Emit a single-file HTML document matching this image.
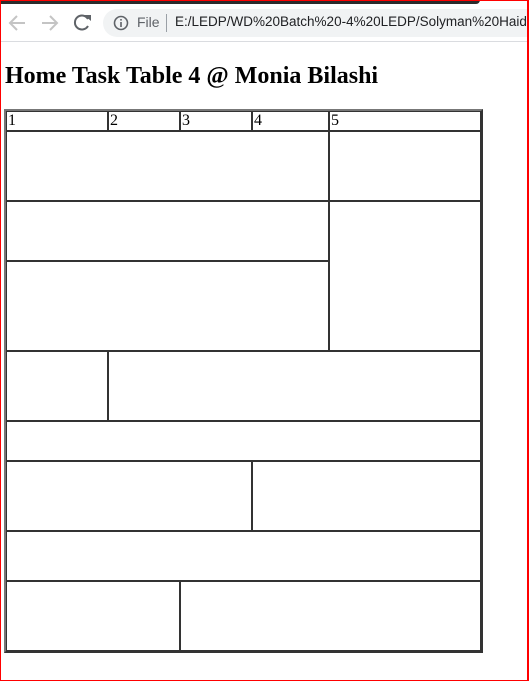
<!DOCTYPE html>
<html><head><style>
*{margin:0;padding:0;box-sizing:border-box}
body{width:529px;height:681px;position:relative;background:#fff;overflow:hidden;font-family:"Liberation Serif",serif}
.a{position:absolute}
.c{position:absolute;border:1px solid #333;font-size:16px;line-height:17px;color:#000;padding-left:1px}
</style></head><body>
<div class="a" style="left:103px;top:9px;width:424px;height:28px;background:#f1f3f4;border-radius:14px 0 0 14px"></div>
<div class="a" style="left:0;top:0;width:480px;height:4px;background:#2b2b2b;border-bottom-right-radius:4px"></div>
<div class="a" style="left:0;top:41px;width:528px;height:1px;background:#dadce0"></div>
<svg class="a" style="left:0;top:0" width="110" height="41">
<g fill="none" stroke-width="2">
<path d="M25 23H11M17 16l-7 7 7 7" stroke="#c4c4c4"/>
<path d="M42 23h14M50 16l7 7-7 7" stroke="#c4c4c4"/>
<path d="M88 19a7 7 0 1 0 0 7" stroke="#5f6368"/>
</g>
<path d="M84 15h7v6z" fill="#5f6368"/>
</svg>
<svg class="a" style="left:113px;top:15px" width="16" height="16"><circle cx="8" cy="8" r="6.5" fill="none" stroke="#5f6368" stroke-width="1.6"/><rect x="7.2" y="7" width="1.6" height="5" fill="#5f6368"/><rect x="7.2" y="4" width="1.6" height="1.6" fill="#5f6368"/></svg>
<div class="a" style="left:137px;top:14px;font:14px 'Liberation Sans',sans-serif;color:#5f6368">File</div>
<div class="a" style="left:166px;top:14px;width:1px;height:18px;background:#9aa0a6"></div>
<div class="a" style="left:175px;top:14px;width:351px;height:20px;overflow:hidden;font:13.5px 'Liberation Sans',sans-serif;color:#202124;white-space:nowrap">E:/LEDP/WD%20Batch%20-4%20LEDP/Solyman%20Haider</div>
<div class="a" style="left:0;top:0;width:529px;height:681px;border:1px solid #f00;border-right-width:2px"></div>
<div class="a" style="left:5px;top:63px;font:bold 24px 'Liberation Serif',serif;white-space:nowrap">Home Task Table 4 @ Monia Bilashi</div>
<div class="a" style="left:4px;top:109px;width:479px;height:544px;border:2px solid;border-color:#777 #333 #333 #777"></div>
<div class="c" style="left:6px;top:111px;width:102px;height:20px">1</div>
<div class="c" style="left:108px;top:111px;width:72px;height:20px">2</div>
<div class="c" style="left:180px;top:111px;width:72px;height:20px">3</div>
<div class="c" style="left:252px;top:111px;width:77px;height:20px">4</div>
<div class="c" style="left:329px;top:111px;width:152px;height:20px">5</div>
<div class="c" style="left:6px;top:131px;width:323px;height:70px"></div>
<div class="c" style="left:329px;top:131px;width:152px;height:70px"></div>
<div class="c" style="left:6px;top:201px;width:323px;height:60px"></div>
<div class="c" style="left:6px;top:261px;width:323px;height:90px"></div>
<div class="c" style="left:329px;top:201px;width:152px;height:150px"></div>
<div class="c" style="left:6px;top:351px;width:102px;height:70px"></div>
<div class="c" style="left:108px;top:351px;width:373px;height:70px"></div>
<div class="c" style="left:6px;top:421px;width:475px;height:40px"></div>
<div class="c" style="left:6px;top:461px;width:246px;height:70px"></div>
<div class="c" style="left:252px;top:461px;width:229px;height:70px"></div>
<div class="c" style="left:6px;top:531px;width:475px;height:50px"></div>
<div class="c" style="left:6px;top:581px;width:174px;height:70px"></div>
<div class="c" style="left:180px;top:581px;width:301px;height:70px"></div>
</body></html>
